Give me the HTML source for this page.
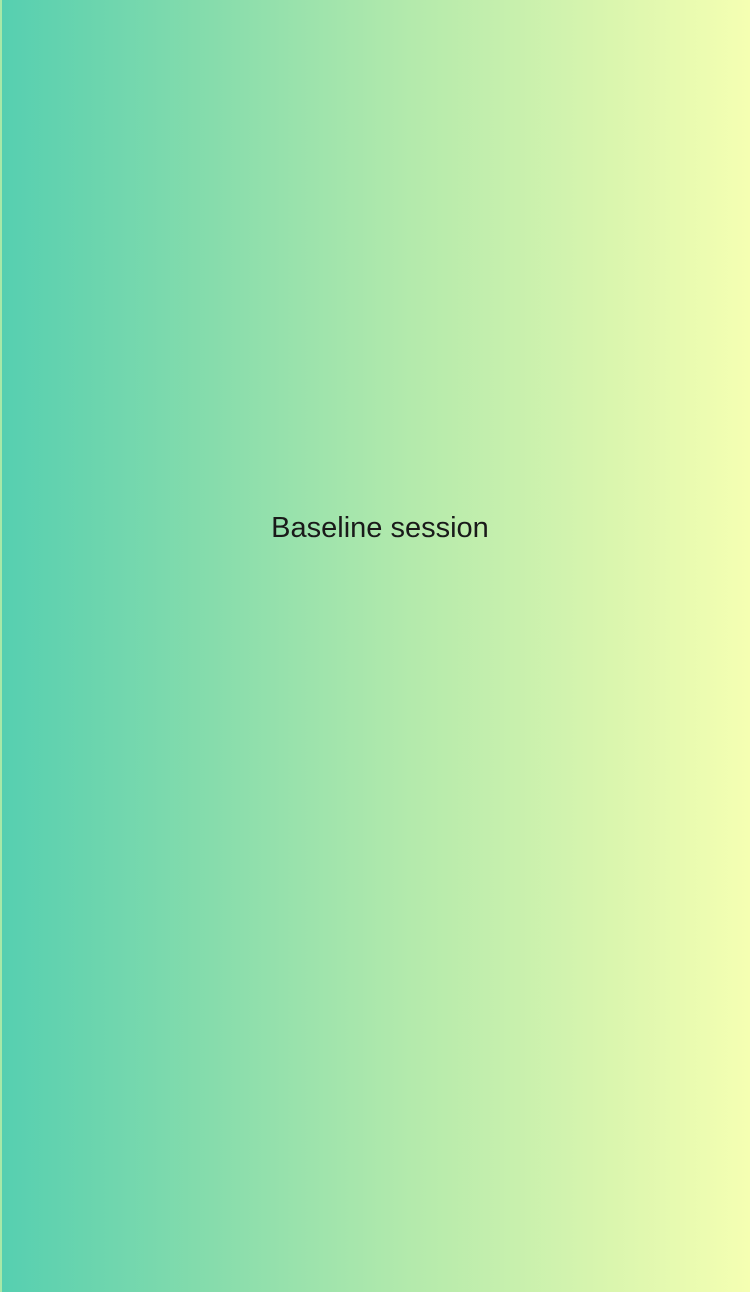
<!DOCTYPE html>
<html><head><meta charset="utf-8"><style>
html,body{margin:0;padding:0;}
body{width:750px;height:1292px;position:relative;overflow:hidden;background:#a9e8a8;}
.bg{position:absolute;left:2px;top:0;width:748px;height:1292px;background:linear-gradient(to right,#56cfb0 0%,#86dcac 28%,#b4eaac 55%,#d8f5ae 80%,#f5ffb2 100%);}
.t{position:absolute;left:2px;width:756px;top:510px;text-align:center;font-family:"Liberation Sans",sans-serif;font-size:29px;color:#1a1a1a;line-height:36px;}
</style></head><body>
<div class="bg"></div>
<div class="t">Baseline session</div>
</body></html>
